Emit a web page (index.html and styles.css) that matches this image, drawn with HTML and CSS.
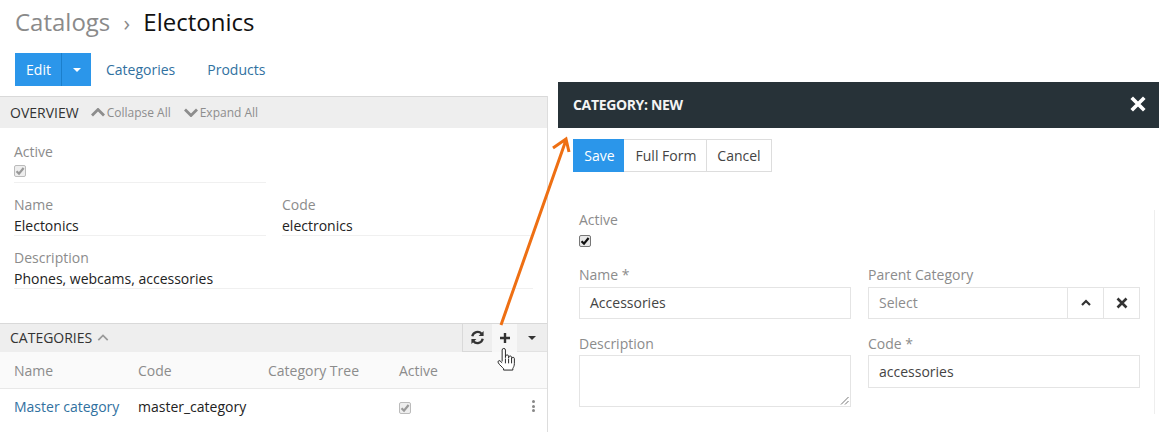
FILE: index.html
```html
<!DOCTYPE html>
<html lang="en">
<head>
<meta charset="utf-8">
<title>Electonics</title>
<link rel="stylesheet" href="styles.css">
</head>
<body>
<div class="page">
  <main class="left">
    <h1 class="title"><span class="crumb">Catalogs</span><span class="sep">›</span><span>Electonics</span></h1>
    <nav class="actions">
      <div class="split">
        <button class="btn-primary">Edit</button>
        <button class="btn-primary caret-btn"><span class="caret"></span></button>
      </div>
      <a class="tab">Categories</a>
      <a class="tab">Products</a>
    </nav>
    <div class="panel">
      <section class="bar overview">
        <span class="bar-title">OVERVIEW</span>
        <span class="fold"><svg class="chev" viewBox="0 0 14 9"><path d="M1 7.500 7 1.500l6 6"/></svg>Collapse All</span>
        <span class="fold"><svg class="chev" viewBox="0 0 14 9"><path d="M1 1.500 7 7.500l6-6"/></svg>Expand All</span>
      </section>
      <section class="details">
        <div class="field narrow">
          <div class="label">Active</div>
          <div class="value check-value"><span class="check disabled"><svg viewBox="0 0 10 10"><path d="M1.500 5.200 4 7.600 8.600 2"/></svg></span></div>
        </div>
        <div class="two">
          <div class="field">
            <div class="label">Name</div>
            <div class="value">Electonics</div>
          </div>
          <div class="field">
            <div class="label">Code</div>
            <div class="value">electronics</div>
          </div>
        </div>
        <div class="field">
          <div class="label">Description</div>
          <div class="value">Phones, webcams, accessories</div>
        </div>
      </section>
      <section class="bar categories">
        <span class="bar-title">CATEGORIES</span>
        <svg class="chev up-soft" viewBox="0 0 14 9"><path d="M1.500 7.500 7 2l5.500 5.500"/></svg>
        <div class="tools">
          <span class="tool refresh-tool"><svg class="refresh" viewBox="0 0 16 16"><path d="M2.400 6.600A5.800 5.800 0 0 1 12.400 4M13.600 9.400A5.800 5.800 0 0 1 3.600 12"/><path class="fill" d="M14.500 1v5.300H9.200zM1.500 15V9.700h5.300z"/></svg></span>
          <span class="tool active"><svg class="plus" viewBox="0 0 12 12"><path d="M6 1v10M1 6h10"/></svg></span>
          <span class="tool plain"><span class="caret dark"></span></span>
        </div>
      </section>
      <div class="row head">
        <span class="c1">Name</span><span class="c2">Code</span><span class="c3">Category Tree</span><span class="c4">Active</span>
      </div>
      <div class="row body">
        <a class="c1 link">Master category</a><span class="c2">master_category</span><span class="c3"></span>
        <span class="c4"><span class="check disabled small"><svg viewBox="0 0 10 10"><path d="M1.500 5.200 4 7.600 8.600 2"/></svg></span></span>
        <span class="dots"><i></i><i></i><i></i></span>
      </div>
    </div>
  </main>

  <aside class="dialog">
    <header class="dialog-head">
      <span>CATEGORY: NEW</span>
      <svg class="close" viewBox="0 0 14 14"><path d="M1.500 1.500l11 11M12.500 1.500l-11 11"/></svg>
    </header>
    <div class="dialog-actions">
      <button class="seg save">Save</button><button class="seg">Full Form</button><button class="seg">Cancel</button>
    </div>
    <form class="form">
      <div class="form-top">
        <div class="flabel">Active</div>
        <div class="check-line"><span class="check on"><svg viewBox="0 0 10 10"><path d="M1.500 5.200 4 7.600 8.600 2"/></svg></span></div>
      </div>
      <div class="form-top"></div>
      <div class="fgroup">
        <div class="flabel low">Name *</div>
        <div class="input">Accessories</div>
      </div>
      <div class="fgroup">
        <div class="flabel low">Parent Category</div>
        <div class="picker">
          <div class="input placeholder">Select</div>
          <span class="pick-btn"><svg class="mini" viewBox="0 0 12 8"><path d="M2 6 6 2l4 4"/></svg></span>
          <span class="pick-btn"><svg class="mini x" viewBox="0 0 12 12"><path d="M1.500 1.500l9 9M10.500 1.500l-9 9"/></svg></span>
        </div>
      </div>
      <div class="fgroup">
        <div class="flabel low">Description</div>
        <div class="input area"><svg class="grip" viewBox="0 0 9 9"><path d="M8.500 1 1 8.500M8.500 5 5 8.500"/></svg></div>
      </div>
      <div class="fgroup">
        <div class="flabel low">Code *</div>
        <div class="input tight">accessories</div>
      </div>
    </form>
  </aside>
</div>

<svg class="arrow" viewBox="0 0 90 200"><path d="M11 195 76 10M63 18l13-9 3 13"/></svg>
<svg class="hand" viewBox="0 0 20 26"><path d="M6 15V3.200a1.700 1.700 0 0 1 3.400 0V11l.2-1.700a1.600 1.600 0 0 1 3.100.3v1.700l.2-1a1.500 1.500 0 0 1 2.900.4v1.600l.2-.7a1.400 1.400 0 0 1 2.700.5V17c0 3-1 4-1.600 5.400V24H7.500v-1.400C6 20.500 3.800 19.500 2 16.500c-.8-1.500.3-2.800 1.700-2.200L6 16.500"/><path d="M9.400 12v5M12.700 12v5M15.800 12v5"/></svg>
</body>
</html>
```
FILE: styles.css
```css
* { box-sizing: border-box; }
html, body { margin: 0; padding: 0; }
body {
  width: 1159px;
  height: 432px;
  overflow: hidden;
  position: relative;
  background: #fff;
  font-family: "Open Sans", "Liberation Sans", sans-serif;
  font-size: 14px;
  color: #222;
}
button { font: inherit; border: 0; cursor: pointer; }
.page { display: flex; height: 432px; }

/* left column */
.left { width: 548px; flex: none; }
.title {
  margin: 0;
  height: 53px;
  padding: 5px 0 0 15px;
  font-size: 24px;
  line-height: 34px;
  font-weight: 400;
  color: #111;
  display: flex;
}
.crumb { color: #8a8a8a; }
.sep { color: #8a8a8a; width: 33px; text-align: center; font-size: 22px; }
.actions { display: flex; align-items: center; height: 33px; padding-left: 15px; margin-bottom: 10px; }
.split { display: flex; gap: 1px; background: #1b7fcc; margin-right: 15px; }
.btn-primary { background: #2b96ea; color: #fff; height: 33px; width: 46px; padding: 0 0 0 1px; }
.caret-btn { width: 29px; padding: 0; display: flex; align-items: center; justify-content: center; }
.caret {
  display: block;
  width: 0; height: 0;
  border-left: 4px solid transparent;
  border-right: 4px solid transparent;
  border-top: 4px solid #fff;
}
.caret.dark { border-top-color: #333; }
.tab { color: #31719f; margin-right: 32px; }
.panel { border-right: 1px solid #ddd; height: 336px; }
.bar {
  display: flex;
  align-items: center;
  background: #eee;
  border-top: 1px solid #d9d9d9;
  color: #333;
}
.overview { height: 32px; padding-left: 10px; }
.bar-title { font-size: 14px; }
.fold {
  display: flex;
  align-items: center;
  font-size: 12px;
  color: #8d8d8d;
  margin-left: 12px;
}
.fold + .fold { margin-left: 13px; }
.chev { width: 14px; height: 9px; fill: none; stroke: #8d8d8d; stroke-width: 2.800; margin-right: 2px; }
.details { padding: 14px 14px 0; height: 195px; }
.field { border-bottom: 1px solid #f0f0f0; height: 41px; margin-bottom: 12px; }
.label { color: #8c8c8c; height: 20px; line-height: 20px; }
.value { height: 20px; line-height: 22px; color: #222; }
.narrow { width: 252px; }
.check-value { display: flex; align-items: center; height: 18px; }
.two { display: grid; grid-template-columns: 252px 252px; column-gap: 16px; }
.check {
  width: 12px; height: 12px;
  display: inline-flex;
  border: 1px solid #bbb;
  border-radius: 2px;
  background: #eee;
}
.check svg { width: 100%; height: 100%; fill: none; stroke: #999; stroke-width: 2.200; }
.check.on { background: #e8e8e8; border-color: #777; }
.check.on svg { stroke: #111; }
.check.small { vertical-align: -1px; }
.categories { height: 29px; padding: 0 0 2px 10px; }
.up-soft { margin-left: 5px; stroke: #999; stroke-width: 2; width: 12px; }
.tools { margin: 0 0 -2px auto; display: flex; height: 28px; }
.tool {
  display: flex;
  align-items: center;
  justify-content: center;
}
.refresh-tool { width: 30px; border-left: 1px solid #d9d9d9; border-bottom: 1px solid #d9d9d9; }
.tool.active { background: #f7f7f7; width: 25px; }
.tool.plain { width: 30px; border-bottom: 1px solid #e2e2e2; }
.refresh { width: 15px; height: 15px; fill: none; stroke: #333; stroke-width: 2.400; }
.refresh .fill { fill: #333; stroke: none; }
.plus { width: 12px; height: 12px; fill: none; stroke: #333; stroke-width: 2.400; }
.row { display: flex; align-items: center; position: relative; padding-left: 14px; }
.row.head { height: 37px; background: #fafafa; border-bottom: 1px solid #e8e8e8; color: #8c8c8c; }
.row.body { height: 37px; color: #222; padding-bottom: 2px; }
.c1 { width: 124px; flex: none; }
.c2 { width: 130px; flex: none; }
.c3 { width: 131px; flex: none; }
.c4 { width: 60px; flex: none; }
.link { color: #31719f; }
.dots { position: absolute; left: 532px; top: 11px; display: flex; flex-direction: column; gap: 1.500px; }
.dots i { display: block; width: 3px; height: 3px; border-radius: 50%; background: #888; }

/* dialog */
.dialog { margin: 82px 0 0 10px; flex: 1; min-width: 0; }
.dialog-head {
  height: 46px;
  background: #273238;
  color: #f4f4f4;
  display: flex;
  align-items: center;
  justify-content: space-between;
  padding: 0 13px 2px 15px;
  font-size: 14px;
  font-weight: 700;
  letter-spacing: -0.35px;
}
.close { width: 16px; height: 16px; fill: none; stroke: #fff; stroke-width: 3.200; }
.dialog-actions { display: flex; margin: 11px 0 0 15px; height: 33px; }
.seg {
  height: 33px;
  background: #fff;
  border: 1px solid #ddd;
  border-left: 0;
  color: #444;
  padding: 0 0 0 2px;
  width: 83px;
}
.seg:last-child { width: 65px; padding: 0; }
.seg.save { width: 51px; background: #2b96ea; color: #fff; border: 0; }
.form {
  margin: 38px 4px 0 21px;
  height: 204px;
  border-right: 1px solid #eee;
  display: grid;
  grid-template-columns: 272px 272px;
  column-gap: 17px;
  align-content: start;
}
.form-top { height: 54px; }
.fgroup { margin-bottom: 14px; }
.flabel { color: #8c8c8c; height: 20px; line-height: 20px; }
.flabel.low { line-height: 21px; }
.check-line { height: 22px; display: flex; align-items: center; }
.input {
  height: 32px;
  border: 1px solid #e4e4e4;
  padding: 0 10px;
  line-height: 30px;
  color: #444;
  margin-top: 3px;
  position: relative;
}
.input.tight { margin-top: 2px; height: 33px; line-height: 31px; }
.placeholder { color: #8c8c8c; flex: 1; margin-top: 0; }
.picker { display: flex; height: 32px; margin-top: 3px; }
.pick-btn {
  width: 36px;
  flex: none;
  height: 32px;
  border: 1px solid #e4e4e4;
  border-left: 0;
  display: flex;
  align-items: center;
  justify-content: center;
}
.mini { width: 12px; height: 8px; fill: none; stroke: #333; stroke-width: 2.200; }
.mini.x { height: 12px; stroke-width: 2.600; }
.area { height: 52px; margin-top: 2px; }
.grip { position: absolute; right: 1px; bottom: 1px; width: 9px; height: 9px; fill: none; stroke: #777; stroke-width: 1; }

/* overlays */
.arrow {
  position: absolute;
  left: 490px;
  top: 130px;
  width: 90px;
  height: 200px;
  fill: none;
  stroke: #ee6f13;
  stroke-width: 3;
}
.hand {
  position: absolute;
  left: 496px;
  top: 347px;
  width: 20px;
  height: 25px;
  fill: #fff;
  stroke: #222;
  stroke-width: 1;
}
```
